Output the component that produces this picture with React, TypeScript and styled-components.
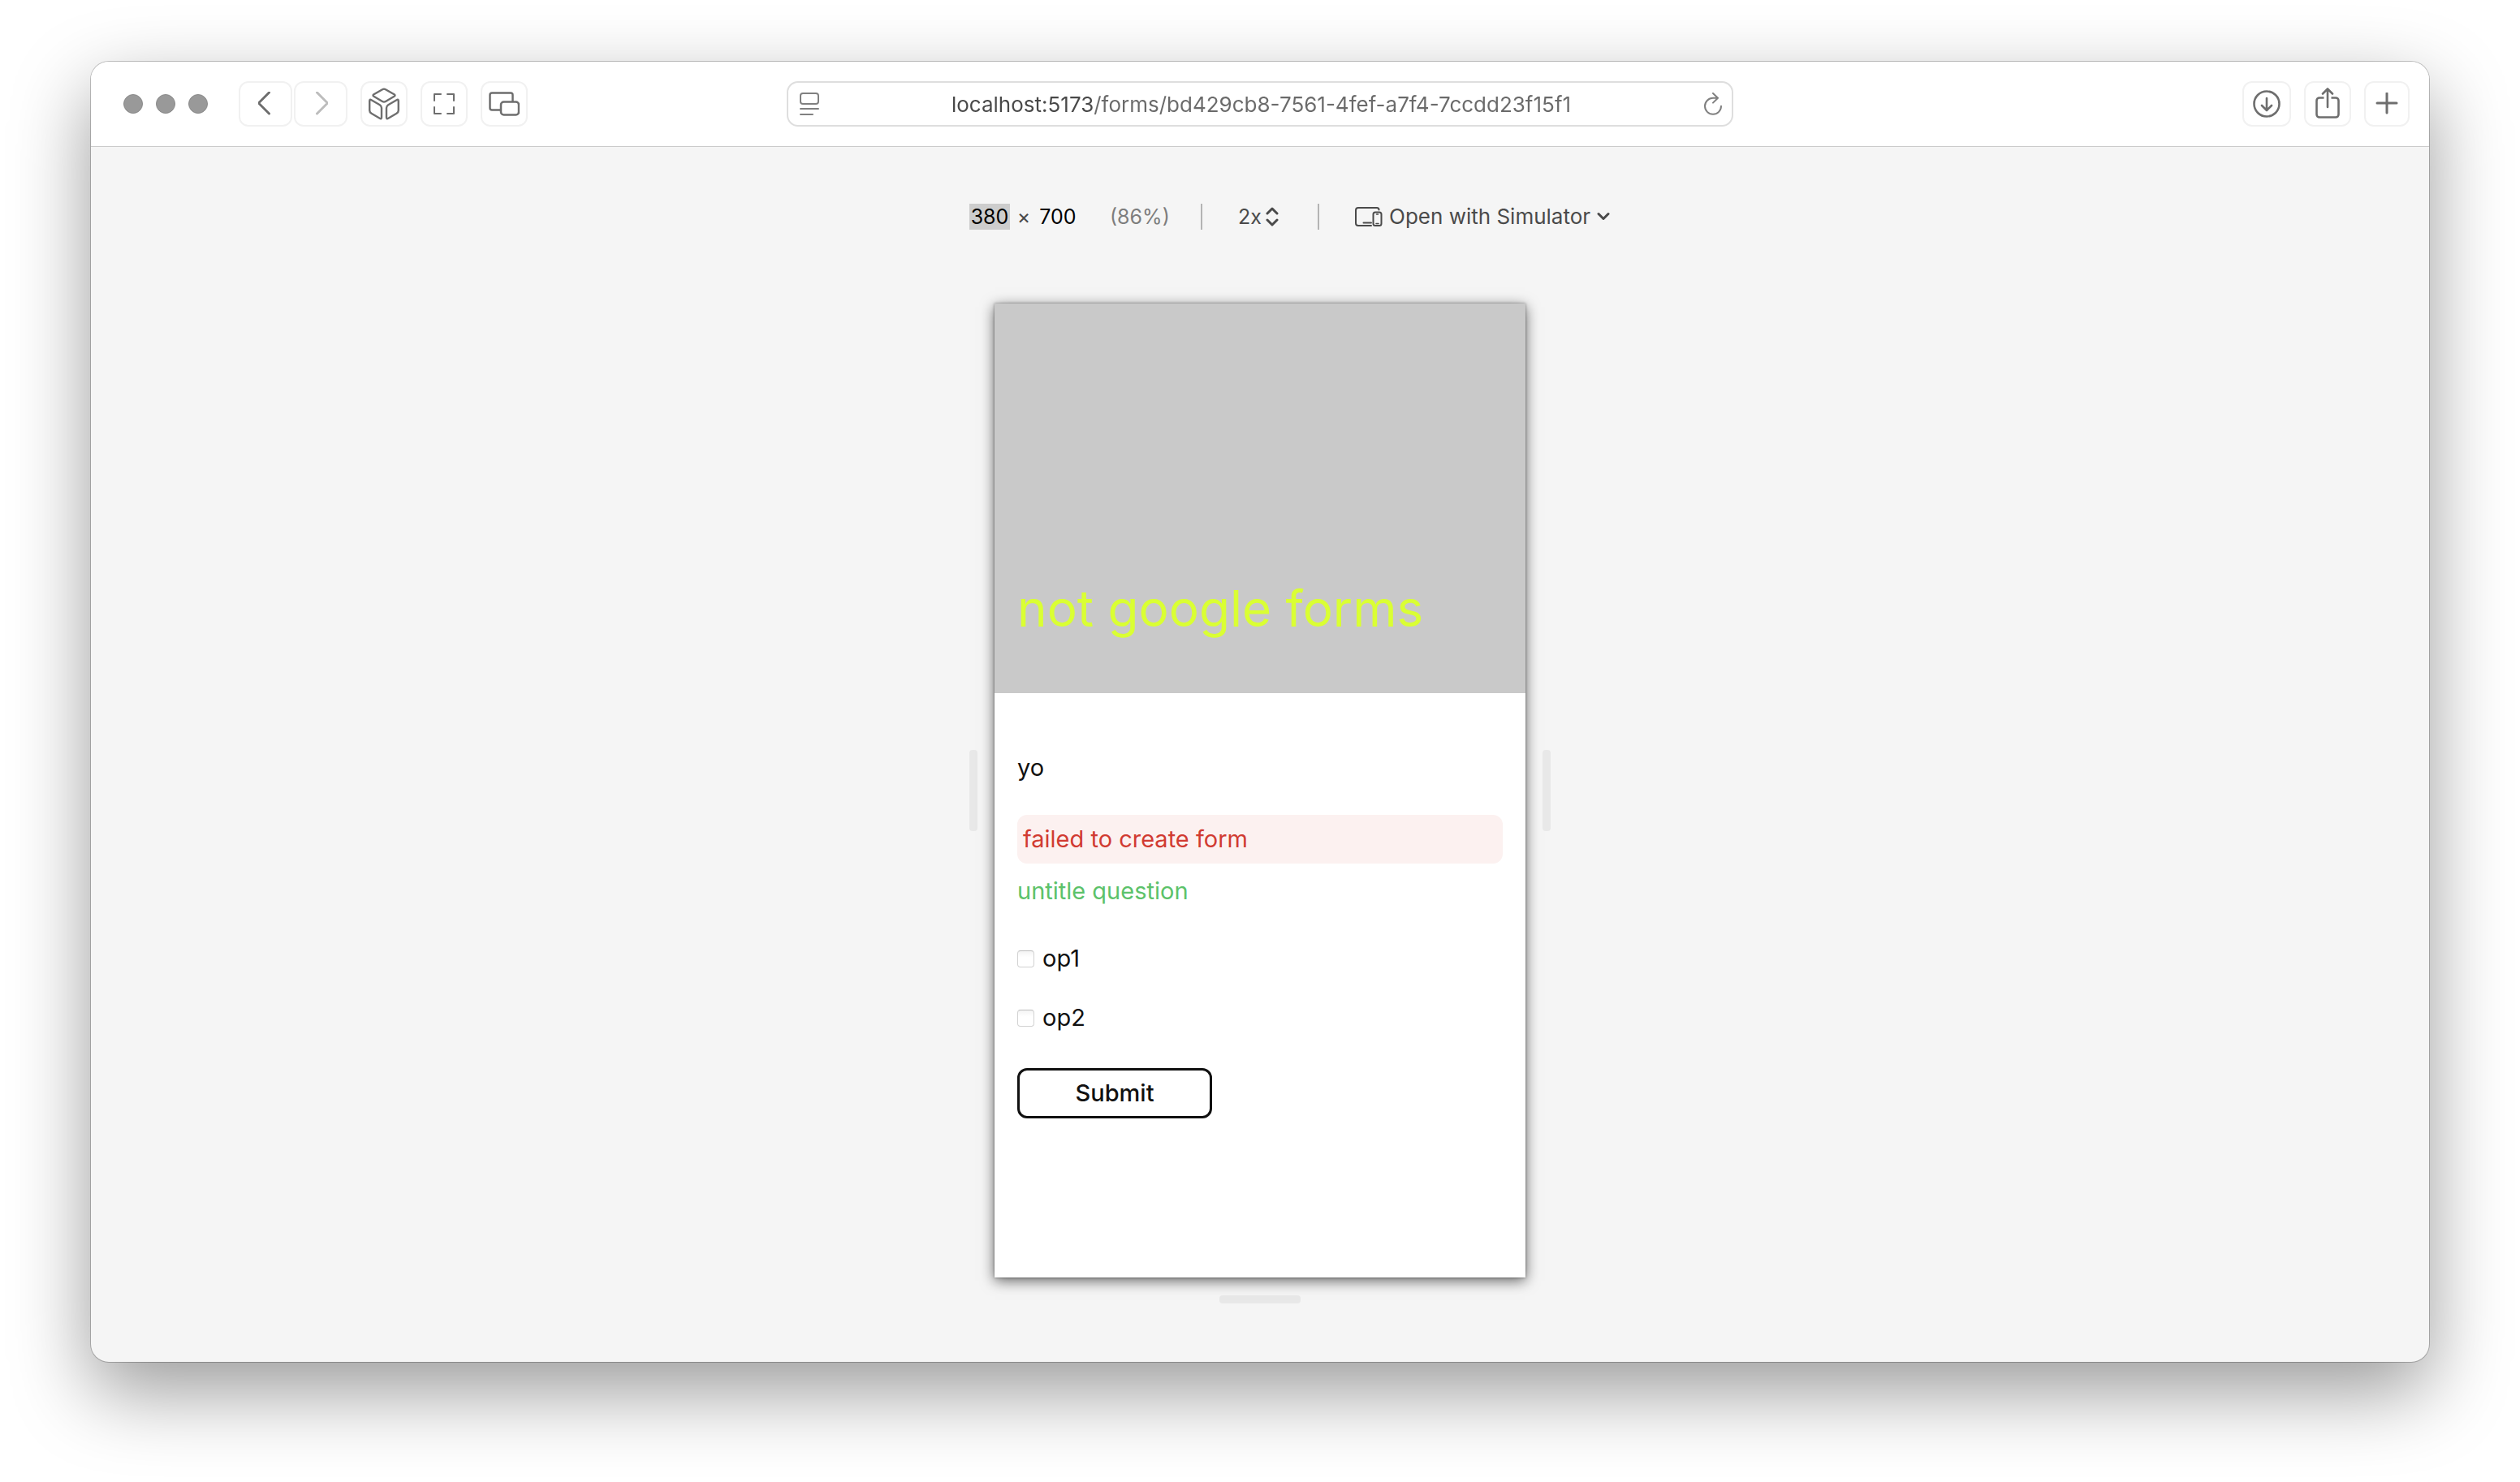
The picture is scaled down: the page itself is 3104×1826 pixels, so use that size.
import React, { useState } from "react";
import styled, { createGlobalStyle } from "styled-components";

const GlobalStyle = createGlobalStyle`
  *, *::before, *::after { box-sizing: border-box; }
  body {
    margin: 0;
    background: #fff;
    color: #111;
    font-family: Inter, "Liberation Sans", sans-serif;
  }
  button, input, select {
    font: inherit;
    color: inherit;
    margin: 0;
    padding: 0;
    border: 0;
    background: none;
    outline: none;
  }
`;

const Desktop = styled.div`
  display: flex;
  min-height: 100vh;
  padding: 76px 112px 148px;
`;

const BrowserWindow = styled.div`
  display: flex;
  flex: 1;
  flex-direction: column;
  min-width: 0;
  overflow: hidden;
  border-radius: 22px;
  background: #f5f5f5;
  box-shadow: 0 0 0 1px rgba(0, 0, 0, 0.22), 0 36px 96px rgba(0, 0, 0, 0.4);
`;

const TitleBar = styled.header`
  display: grid;
  grid-template-columns: 1fr minmax(0, 1166px) 1fr;
  align-items: center;
  height: 105px;
  padding: 0 24px 0 40px;
  border-bottom: 1px solid #cbcbcb;
  background: #fff;
`;

const LeftControls = styled.div`
  display: flex;
  align-items: center;
  gap: 38px;
  margin-right: 16px;
`;

const RightControls = styled.div`
  display: flex;
  justify-content: flex-end;
  gap: 16px;
`;

const TrafficLights = styled.div`
  display: flex;
  gap: 16px;
`;

const Light = styled.span`
  width: 24px;
  height: 24px;
  border: 1px solid #8a8a8a;
  border-radius: 50%;
  background: #999;
`;

const Tools = styled.div`
  display: flex;
  gap: 16px;
`;

const History = styled.nav`
  display: flex;
  gap: 2px;
`;

const ToolButton = styled.button<{ $width: number }>`
  display: grid;
  place-items: center;
  flex: none;
  width: ${(p) => p.$width}px;
  height: 56px;
  border: 2px solid #f1f1f1;
  border-radius: 12px;
  color: #6e6e6e;

  &:disabled { color: #bdbdbd; }
`;

const AddressBar = styled.div`
  display: flex;
  align-items: center;
  height: 56px;
  margin-left: -8px;
  margin-right: 8px;
  padding: 0 11px 0 14px;
  border: 2px solid #dedede;
  border-radius: 14px;
  color: #808080;
`;

const AddressInput = styled.input`
  flex: 1;
  min-width: 0;
  height: 36px;
  font-size: 26px;
  text-align: center;
  color: transparent;
  caret-color: #4a4a4a;
  background: linear-gradient(90deg, #484848 calc(50% - 205px), #6a6a6a calc(50% - 205px));
  -webkit-background-clip: text;
  background-clip: text;
`;

const IconButton = styled.button`
  display: grid;
  place-items: center;
  color: inherit;
`;

const Icon = styled.svg`
  display: block;
  flex: none;
  fill: none;
  stroke: currentColor;
  stroke-linecap: round;
  stroke-linejoin: round;
`;

const Stage = styled.main`
  display: flex;
  flex: 1;
  flex-direction: column;
  align-items: center;
  padding: 70px 24px 71px;
`;

const Workspace = styled.div`
  width: 716px;
`;

const DeviceBar = styled.div`
  display: flex;
  align-items: center;
  width: max-content;
  height: 32px;
  margin-bottom: 91px;
  font-size: 26px;
  line-height: 32px;
  color: #4a4a4a;
`;

const SizeInput = styled.input<{ $selected?: boolean }>`
  width: 50px;
  height: 32px;
  text-align: center;
  font-size: 25px;
  color: #000;
  background: ${(p) => (p.$selected ? "#cdcdcd" : "transparent")};
`;

const Times = styled.span`
  width: 34px;
  text-align: center;
  font-size: 25px;
`;

const Zoom = styled.span`
  width: 76px;
  margin-left: 39px;
  font-size: 25px;
  color: #7d7d7d;
`;

const Divider = styled.span`
  width: 2px;
  height: 32px;
  margin: 0 44px 0 36px;
  background: #b4b4b4;
`;

const Ratio = styled.label`
  display: flex;
  align-items: center;
  gap: 2px;
  width: 62px;
`;

const RatioSelect = styled.select`
  appearance: none;
  width: 32px;
  height: 32px;
  font-size: 25px;
`;

const SimulatorButton = styled.button`
  display: flex;
  align-items: center;
  gap: 8px;
`;

const Viewport = styled.div`
  display: flex;
  align-items: center;
  justify-content: space-between;
`;

const Handle = styled.div<{ $horizontal?: boolean }>`
  width: ${(p) => (p.$horizontal ? 100 : 10)}px;
  height: ${(p) => (p.$horizontal ? 10 : 100)}px;
  margin: ${(p) => (p.$horizontal ? "22px auto 0" : "0")};
  border-radius: 4px;
  background: #e8e8e8;
`;

const Device = styled.section`
  width: 654px;
  min-height: 1200px;
  background: #fff;
  box-shadow: 0 0 3px rgba(0, 0, 0, 0.4), 0 4px 16px rgba(0, 0, 0, 0.6);
`;

const Banner = styled.div`
  display: flex;
  align-items: flex-end;
  min-height: 480px;
  padding: 0 28px 64px;
  background: #c9c9c9;
`;

const FormTitle = styled.h1`
  margin: 0;
  font-size: 62px;
  font-weight: 400;
  line-height: 80px;
  color: #daff33;
`;

const Form = styled.form`
  display: flex;
  flex-direction: column;
  padding: 72px 28px;
  font-size: 29px;
  line-height: 40px;
`;

const Description = styled.p`
  margin: 0 0 38px;
`;

const ErrorMessage = styled.p`
  margin: 0;
  padding: 10px 7px;
  border-radius: 12px;
  background: #fcf1f0;
  color: #d13b32;
`;

const Question = styled.fieldset`
  display: flex;
  flex-direction: column;
  gap: 33px;
  min-width: 0;
  margin: 14px 0 42px;
  padding: 0;
  border: 0;
`;

const QuestionTitle = styled.legend`
  margin-bottom: 43px;
  padding: 0;
  color: #5cc26a;
`;

const Option = styled.label`
  display: flex;
  align-items: center;
  gap: 10px;
`;

const Checkbox = styled.input`
  appearance: none;
  width: 21px;
  height: 21px;
  border: 1px solid #d2d2d2;
  border-top-color: #bdbdbd;
  border-radius: 4px;
  background: linear-gradient(#f4f4f4, #fff 40%);

  &:checked { background: #3478f6; }
`;

const SubmitButton = styled.button`
  width: 240px;
  height: 62px;
  border: 3px solid #111;
  border-radius: 12px;
  font-weight: 500;
`;

const BackIcon = () => (
  <Icon width="18" height="30" viewBox="2 1 18 30" strokeWidth="3"><path d="M15.5 2 2.5 15l13 13" /></Icon>
);
const ForwardIcon = () => (
  <Icon width="18" height="30" viewBox="-2 1 18 30" strokeWidth="3"><path d="m2.5 2 13 13-13 13" /></Icon>
);
const CubeIcon = () => (
  <Icon width="38" height="40" viewBox="0 0 38 40" strokeWidth="2.4">
    <path d="M17 2.2q2-1.200 4 0l10.500 6q2 1.300 0 2.600L21 17q-2 1.200-4 0L6.500 10.800q-2-1.300 0-2.600z" />
    <path d="M1.200 16.500q0-2.600 2.300-1.300l10.300 6q2.200 1.300 2.200 3.800v11.500q0 2.600-2.300 1.300l-10.200-6q-2.300-1.400-2.300-3.800z" />
    <path d="M36.800 16.500q0-2.600-2.300-1.300l-10.300 6q-2.200 1.300-2.200 3.800v11.500q0 2.600 2.300 1.300l10.200-6q2.300-1.400 2.300-3.800z" />
  </Icon>
);
const CornersIcon = () => (
  <Icon width="26" height="26" viewBox="0 0 26 26" strokeWidth="2">
    <path d="M1 9V1h8M17 1h8v8M25 17v8h-8M9 25H1v-8" />
  </Icon>
);
const WindowsIcon = () => (
  <Icon width="38" height="30" viewBox="0 0 38 30" strokeWidth="2.5">
    <rect x="1.5" y="1.5" width="28" height="21" rx="2.5" />
    <rect x="15" y="12.5" width="22" height="16" rx="3.5" fill="#fff" />
  </Icon>
);
const ReaderIcon = () => (
  <Icon width="24" height="28" viewBox="0 0 24 28" strokeWidth="2">
    <rect x="1" y="1" width="22" height="13" rx="3" />
    <path d="M1 20h22M1 27h15" />
  </Icon>
);
const ReloadIcon = () => (
  <Icon width="24" height="28" viewBox="0 0 24 28" strokeWidth="2">
    <path d="M17.500 6.800H12A10 10 0 1 0 22 16.800M12 1l6 5.800-6 5.800" />
  </Icon>
);
const DownloadIcon = () => (
  <Icon width="36" height="36" viewBox="0 0 36 36" strokeWidth="2.6">
    <circle cx="18" cy="18" r="15.5" />
    <path d="M18 11v15M12 20l6 6 6-6" />
  </Icon>
);
const ShareIcon = () => (
  <Icon width="32" height="40" viewBox="0 1 32 40" strokeWidth="2.6">
    <path d="M11.500 13.500H6a3.500 3.500 0 0 0-3.500 3.500v17A3.500 3.500 0 0 0 6 37.500h20a3.500 3.500 0 0 0 3.500-3.500V17a3.500 3.500 0 0 0-3.500-3.500h-5.500" strokeLinecap="butt" />
    <path d="M16 25V2.500M10 8.500l6-6 6 6" />
  </Icon>
);
const PlusIcon = () => (
  <Icon width="28" height="28" viewBox="0 1 28 28" strokeWidth="3"><path d="M14 2v24M2 14h24" /></Icon>
);
const UpDownIcon = () => (
  <Icon width="16" height="24" viewBox="0 0 16 24" strokeWidth="3"><path d="m2 8 6-6 6 6M2 16l6 6 6-6" /></Icon>
);
const DevicesIcon = () => (
  <Icon width="34" height="24" viewBox="0 0 34 24" strokeWidth="2">
    <path d="M29.500 3.500Q29.500 1 27 1H4Q1 1 1 4v16q0 3 3 3h16M10.500 19.500H20" />
    <rect x="22.5" y="6.5" width="10" height="16.5" rx="2.5" />
    <path d="M26.500 9h2M26 20.500h3" strokeWidth="1.5" />
  </Icon>
);
const DownIcon = () => (
  <Icon width="16" height="12" viewBox="0 0 16 12" strokeWidth="3"><path d="m2 2.500 6 6 6-6" /></Icon>
);

function PreviewForm() {
  return (
    <Device>
      <Banner>
        <FormTitle>not google forms</FormTitle>
      </Banner>
      <Form onSubmit={(e) => e.preventDefault()}>
        <Description>yo</Description>
        <ErrorMessage role="alert">failed to create form</ErrorMessage>
        <Question>
          <QuestionTitle>untitle question</QuestionTitle>
          {["op1", "op2"].map((name) => (
            <Option key={name}>
              <Checkbox type="checkbox" name={name} />
              {name}
            </Option>
          ))}
        </Question>
        <SubmitButton type="submit">Submit</SubmitButton>
      </Form>
    </Device>
  );
}

export default function App() {
  const [url, setUrl] = useState("localhost:5173/forms/bd429cb8-7561-4fef-a7f4-7ccdd23f15f1");
  return (
    <>
      <GlobalStyle />
      <Desktop>
        <BrowserWindow>
          <TitleBar>
            <LeftControls>
              <TrafficLights>
                <Light />
                <Light />
                <Light />
              </TrafficLights>
              <Tools>
                <History>
                  <ToolButton $width={66} aria-label="Back"><BackIcon /></ToolButton>
                  <ToolButton $width={66} aria-label="Forward" disabled><ForwardIcon /></ToolButton>
                </History>
                <ToolButton $width={58} aria-label="3D view"><CubeIcon /></ToolButton>
                <ToolButton $width={58} aria-label="Full size"><CornersIcon /></ToolButton>
                <ToolButton $width={58} aria-label="Responsive mode"><WindowsIcon /></ToolButton>
              </Tools>
            </LeftControls>
            <AddressBar>
              <IconButton aria-label="Reader"><ReaderIcon /></IconButton>
              <AddressInput aria-label="Address" value={url} onChange={(e) => setUrl(e.target.value)} />
              <IconButton aria-label="Reload"><ReloadIcon /></IconButton>
            </AddressBar>
            <RightControls>
              <ToolButton $width={60} aria-label="Downloads"><DownloadIcon /></ToolButton>
              <ToolButton $width={58} aria-label="Share"><ShareIcon /></ToolButton>
              <ToolButton $width={56} aria-label="New tab"><PlusIcon /></ToolButton>
            </RightControls>
          </TitleBar>
          <Stage>
            <Workspace>
              <DeviceBar>
                <SizeInput $selected aria-label="Width" defaultValue="380" />
                <Times>×</Times>
                <SizeInput aria-label="Height" defaultValue="700" />
                <Zoom>(86%)</Zoom>
                <Divider />
                <Ratio>
                  <RatioSelect aria-label="Pixel ratio" defaultValue="2x">
                    <option>1x</option>
                    <option>2x</option>
                    <option>3x</option>
                  </RatioSelect>
                  <UpDownIcon />
                </Ratio>
                <Divider />
                <SimulatorButton>
                  <DevicesIcon />
                  Open with Simulator
                  <DownIcon />
                </SimulatorButton>
              </DeviceBar>
              <Viewport>
                <Handle />
                <PreviewForm />
                <Handle />
              </Viewport>
              <Handle $horizontal />
            </Workspace>
          </Stage>
        </BrowserWindow>
      </Desktop>
    </>
  );
}
